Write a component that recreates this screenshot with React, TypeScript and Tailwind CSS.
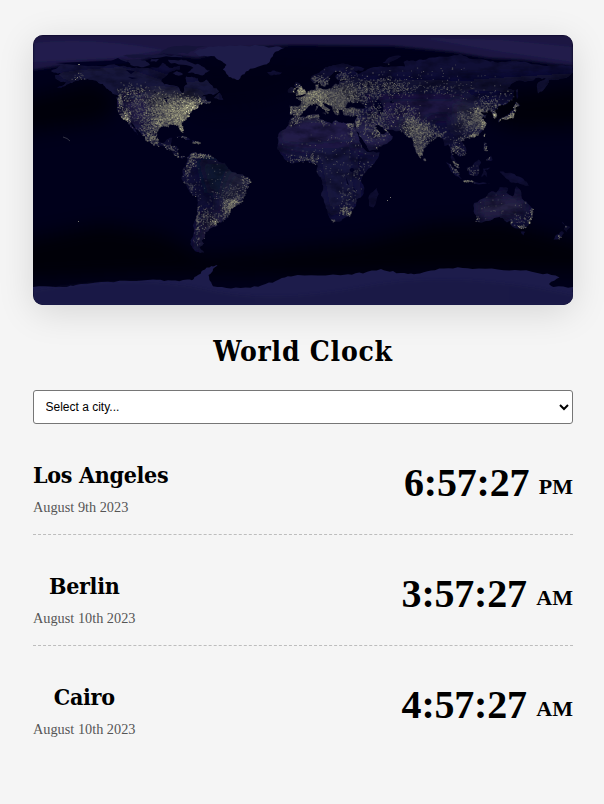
type Pt = [number, number];

// Coastlines as "longitude,latitude" pairs, drawn on an equirectangular grid.
const NORTH_AMERICA =
  "-168,66 -163,69 -157,71 -150,70.5 -141,69.6 -134,69 -128,70.3 -120,69.5 -114,68 -108,68 -102,68 -96,68.5 -94,71.5 -91,69.5 -87,68 -82,69.5 -82,67 -87,66 -90,64 -94,61 -94.5,59 -92.5,57 -88,56.5 -83,55.2 -82,53 -80,51.2 -79,53 -79.5,55 -77,57 -78,60 -78,62.3 -74,62.2 -70,61 -69.5,59 -67,58.5 -64.5,60.3 -62,57.5 -60,55 -56,52.5 -57,51.4 -60,50.2 -66,50.2 -68,48.8 -65,49 -65,47 -61.5,45.8 -64,44.3 -66.5,44.8 -70,43.6 -70.5,42 -72,41 -74,40.5 -75.5,38 -76,36 -77.5,34.5 -81,32 -81.3,30 -80,27 -80.4,25.2 -81.8,26 -82.8,28 -84,30 -86,30.4 -89.5,30.2 -90,29.1 -94,29.6 -97,27.8 -97.7,24.5 -97.5,22 -96,19.2 -94.5,18.2 -92,18.6 -90.5,20.6 -87,21.5 -87.6,19 -88.4,16 -84,15.8 -83.3,13 -83.7,11 -82,9 -79.5,9.5 -77.3,8.5 -78.5,8.6 -80.5,7.3 -83,8.3 -85.8,10 -87.5,13 -91,14 -94,16.2 -97,15.8 -101,17.3 -105.3,19.8 -105.5,22.5 -109,25.7 -112.5,29.5 -114.7,31.7 -112,27.5 -110,23.2 -112.2,25.5 -115,28.5 -117,32.3 -120.5,34.4 -122.3,37 -124.2,40.3 -124,46 -124.5,48.3 -122.8,49 -127,51 -130,54 -133.5,57.5 -137,58.8 -142,60 -148,60.7 -151.5,59.4 -154,58 -158.5,56 -164,54.6 -161,56 -157.5,58.5 -162,59 -165,61 -165.5,63 -161,64.5 -166,65";
const ARCTIC_ISLANDS = [
  "-125,72 -123,74 -117,73 -115,70 -105,69 -102,70 -105,73 -114,73.5 -118,72",
  "-90,73.5 -81,73.6 -77,72.5 -70,70.8 -67,69 -62,66.5 -65,64.8 -67,63 -72,64 -77,65 -73,68 -78,70 -88,71",
  "-98,72 -96,74 -101,74 -102,72.5",
  "-120,76 -110,77 -100,76.5 -90,76.5 -81,76 -80,75 -95,75 -106,75 -115,75",
  "-95,78 -90,81.5 -78,83 -64,82.6 -72,80 -77,77.3 -88,77.3",
  "-87,64.5 -84,66 -80,64 -83,62.8",
];
const GREENLAND =
  "-73,78.3 -67,80.5 -60,82 -45,82.6 -32,83.5 -20,82 -12,81.5 -18,79 -20,76 -22,73 -24,70.5 -32,68 -38,65.7 -41,63 -43,60 -47,61 -51,64 -53.5,67 -51,70 -55,73 -59,75.8 -68,76";
const SOUTH_AMERICA =
  "-77.5,8.5 -75,11 -72,12 -71,11 -68,11.5 -62,10.7 -60,8.5 -57,6 -52,4.8 -50,1 -48,-1 -44,-2.6 -40,-3 -36,-5 -35,-8 -37.5,-12 -39,-16 -40.5,-21 -45,-23.4 -48.5,-26 -49,-29 -52,-33 -54.5,-35 -58,-34.2 -57,-37 -62,-39 -65,-41.5 -65.5,-45 -67.5,-47 -66,-49 -69,-51.5 -66,-55 -71,-54.5 -74,-51 -75,-47 -73,-42 -73.5,-37 -71.5,-32 -70.3,-25 -70.3,-18.5 -75.5,-15 -78.5,-9 -81,-6 -80,-3 -80.5,0 -78,2.5 -77.3,6";
const AFRICA =
  "-6,35.7 -2,35.2 5,36.8 10.5,37.2 11,34 15,32.3 19.5,30.4 21,32.8 25,31.7 29,31 34,31.2 34.5,28 37,22 39,17 43,12 51,11.8 50.5,9 46,3 41.5,-2 39,-6 40.5,-11 40.5,-15.5 35.5,-20 35.4,-24 32.8,-27 30,-31.2 25.5,-34 20,-34.8 18.3,-33 16.5,-28 14.5,-22.5 12,-17 13.7,-11 12,-5 9,-1 9.7,3.5 6.5,4.3 3,6.4 -3,5 -8,4.4 -12.8,7.7 -15,11 -17.4,14.7 -16.3,19.5 -17,21.5 -14.5,26 -10,29.5 -9.5,32";
const EURASIA =
  "-9.3,43 -1.8,43.4 -1.2,46 -4.7,48.3 -1.5,48.7 2,51 5,53.3 8.5,53.8 8.2,57 10.5,57.5 10,55 14,54 19,54.5 21.5,57.5 24,57.2 24,59.3 30,60 23,60 21.5,62 25.5,65 22,65.7 17.5,62 17,59 16.5,57 14,55.5 12.5,56.5 11,59 7,58 5,60 5.5,62.5 11,65 15,68.5 20,70 26,71 31,70 41,67.5 40,66.2 34,66.5 37,64 42,66.4 45,68 54,68.7 60,69 68,69 67,72 72,73 75,72.5 80,73.3 88,75 100,76.4 105,77.6 113,74 123,73 130,71.5 140,72.7 150,71.5 160,69.7 170,70 180,69 180,65 177,62.3 170,60 164,60 163,57 160,53 156.7,51 156,57 162,61 157,61.7 150,59.3 142,59.2 136,54.7 141,53 140,48 135,43.5 130.5,42.5 127.5,39.5 129.3,36 126.5,34.5 126.5,37 125,39.7 121.5,39 118,39 119,37.5 122.5,37 119.2,35 121.8,31.5 121,28 117,23.7 110.5,21.2 108,21.5 105.8,19 109,12.5 106.7,10 105,8.7 100.5,13.5 99.4,10 103.3,4 104,1.3 101,3 98.4,8 98.5,13 97,17 94.3,16 92,21.5 88.5,21.7 86,20 82,16.5 80,13 79.8,10.3 77.5,8 76,11 73.5,16 72.7,21 69,22.4 66.7,25.2 57,26.8 54,26.6 50.5,30 48,30 50.5,25.5 52,24 54.5,24.2 56.4,26 59.8,22.5 56,17.5 52,15.5 44,12.6 42.7,16 39,21.3 35,28 34.5,31.3 36,36.5 30,36.3 27,37 26.3,40 29,41 33,42 38,41 41.5,41.5 38,45 36,45.3 33.5,44.5 31.5,46.5 28.5,43.7 28,41.3 23.5,40.5 24,38 22.7,36.5 19.4,40.5 19.3,42 14,45 12.3,45 14,42.4 18.4,40.2 16,38 12.3,41.7 9,44.3 4.5,43.4 3,42 0,39.7 -0.7,37.6 -5.5,36 -9,37";
const AUSTRALIA =
  "114,-22 114,-26 115.7,-32 115,-34.3 118,-35 123.5,-34 129,-31.7 133,-32 136,-35 138,-34 140,-38 146.5,-39 150,-37.3 153,-31 153.3,-26 149,-21 146,-19 145.5,-15 142.5,-10.8 141,-15 140,-17.6 135.5,-15 136.7,-12 131,-11.5 129,-15 125.5,-14.2 122,-18";
const ANTARCTICA =
  "-180,-78 -165,-78 -155,-77 -148,-76 -130,-74.5 -115,-74 -100,-73 -90,-73.5 -80,-73.4 -74,-73.5 -70,-70 -67,-67 -61,-64 -57,-63.4 -60,-66 -63,-70 -62,-74 -60,-77.5 -48,-79 -35,-78.5 -25,-76 -16,-73 -8,-71 10,-70.3 30,-69.5 40,-69 52,-66 60,-67.4 70,-69.3 78,-69 88,-66.8 100,-65.7 113,-66 130,-66.3 145,-67 160,-69.5 171,-71.7 164,-76 167,-78 180,-78 180,-90 -180,-90";
const ISLANDS = [
  "-5,50 1.5,51.3 1.5,53 -1,54.8 -2,57.5 -5,58.5 -6,56.5 -3,54.5 -5,52",
  "-10,51.7 -6,52.2 -5.7,54.7 -8,55.3 -10,53.5",
  "-24,65.4 -19,66.4 -14,65 -18,63.4 -23,64",
  "130,31.3 131.5,34 135.5,34 140,35.3 142,39.5 141,41.3 145,43.3 142,45.5 140,42 140,39.7 137,37.2 130.5,33.8",
  "142,46 143.5,49 143,54 141.8,53",
  "95.5,5.5 99,3 104,-2 106,-6 102,-4 98,1",
  "105.3,-6.5 110,-6.5 115,-8 125,-9.5 120,-9.3 109,-7.8",
  "109,1.5 113,3.2 117,7 118.8,5 117.5,1 116,-4 110.5,-3",
  "119,-5 120,1 125,1.5 121,0 123,-5 121,-3",
  "131,-1 136,-2 141,-2.6 147,-6 150.5,-10.5 143,-8.5 138,-8 134,-4",
  "120,14 120.5,18.5 122.3,18 122,14 124,12.5 121,13",
  "122,7 125.5,9.7 126.3,6.5 124,6",
  "49.3,-12 50.5,-16 47,-25 44,-24 44,-17",
  "172.7,-34.5 175.5,-37 178.3,-38 175.5,-41.5 173.8,-39.5 174.7,-37",
  "172.7,-40.7 174,-42 170.5,-46 167,-46.5 168,-44",
  "145,-41 148.3,-41 147,-43.6",
  "-85,22 -80,23 -75,20.3 -78,20 -82,22.6",
  "-74,20 -68.5,18.6 -71,17.8 -74,18.3",
  "-59.3,48 -55.5,51.5 -53,47 -56,47",
  "80,9.5 81.8,7 80.2,6",
  "120.2,23 121.6,25 120.8,22",
  "8.2,39 9.7,41 9,42.8 8.6,41", "12.5,38 15.5,38 15,36.8",
  "53,71.5 59,75.5 68,76.8 58,72 57,70.7",
];
const ALL_LAND = [NORTH_AMERICA, SOUTH_AMERICA, AFRICA, EURASIA, AUSTRALIA, ...ISLANDS];

const parse = (s: string): Pt[] =>
  s.split(" ").map((p) => {
    const [lon, lat] = p.split(",").map(Number);
    return [(lon + 180) * 1.5, (90 - lat) * 1.5];
  });

function makeRandom(seed: number) {
  let s = seed;
  return () => {
    s = (s + 0x6d2b79f5) | 0;
    let t = Math.imul(s ^ (s >>> 15), 1 | s);
    t = (t + Math.imul(t ^ (t >>> 7), 61 | t)) ^ t;
    return ((t ^ (t >>> 14)) >>> 0) / 4294967296;
  };
}

// Roughens straight coast segments by midpoint displacement.
function coast(s: string): Pt[] {
  const rnd = makeRandom(s.length * 77);
  let pts = parse(s);
  for (let k = 0; k < 2; k++) {
    const out: Pt[] = [];
    pts.forEach((a, i) => {
      const b = pts[(i + 1) % pts.length];
      const d = Math.hypot(b[0] - a[0], b[1] - a[1]);
      out.push(a);
      if (d > 2.4 && d < 60) {
        const j = (rnd() - 0.5) * Math.min(d, 7) * 0.32;
        out.push([(a[0] + b[0]) / 2 - (j * (b[1] - a[1])) / d, (a[1] + b[1]) / 2 + (j * (b[0] - a[0])) / d]);
      }
    });
    pts = out;
  }
  return pts;
}
const toPath = (pts: Pt[]) => "M" + pts.map(([x, y]) => `${x.toFixed(1)} ${y.toFixed(1)}`).join("L") + "Z";
const outline = (s: string) => toPath(coast(s));

const landShapes = ALL_LAND.map(coast);
const landPath = landShapes.map(toPath).join("");
const arcticPath = ARCTIC_ISLANDS.map(outline).join("");

function inside(x: number, y: number, poly: Pt[]) {
  let hit = false;
  for (let i = 0, j = poly.length - 1; i < poly.length; j = i++) {
    const [xi, yi] = poly[i];
    const [xj, yj] = poly[j];
    if (yi > y !== yj > y && x < ((xj - xi) * (y - yi)) / (yj - yi) + xi) hit = !hit;
  }
  return hit;
}

// Lit regions: lon, lat, spread lon, spread lat, number of lights, strength 0..1
const LIGHTS: number[][] = [
  [-82, 39, 6, 4, 1000, 0.64], [-74.5, 41, 3, 1.6, 220, 0.85], [-88, 38, 6, 6, 850, 0.5], [-82, 33, 4, 3, 300, 0.58],
  [-97, 37, 5, 7, 600, 0.43], [-81, 28, 1.2, 2, 90, 0.85], [-96, 31, 3, 2, 140, 0.65], [-107, 40, 6, 6, 320, 0.33],
  [-119, 36, 2, 2.4, 130, 0.65], [-118, 34, 1.2, 0.7, 40, 0.85], [-122, 46, 1, 3, 75, 0.65], [-113, 52, 5, 3, 150, 0.48],
  [-101, 21, 4, 2.2, 180, 0.56], [-103, 26, 4, 3, 110, 0.4], [-90, 15, 3, 1.6, 70, 0.48], [-84, 10.3, 2, 1, 30, 0.5],
  [-73, 45.8, 4, 1.2, 120, 0.68], [-64, 46, 3, 1.4, 60, 0.5], [-79, 22, 3, 1, 40, 0.48], [-70, 18.7, 2, 0.6, 45, 0.6],
  [-149, 62, 3, 2, 16, 0.5], [-75, 7, 2, 3, 90, 0.5], [-68, 10, 4, 1, 100, 0.58], [-78, -1, 1.5, 3, 45, 0.42],
  [-76, -11, 3, 4, 50, 0.35], [-70.5, -34, 0.8, 6, 80, 0.46], [-64, -32, 4, 4, 140, 0.36], [-59, -34.5, 1.5, 1, 50, 0.7],
  [-47.5, -22.5, 3, 2, 230, 0.52], [-51, -27, 2.5, 3, 150, 0.42], [-42, -18, 3, 3, 90, 0.38], [-37, -8, 2.5, 4, 130, 0.42],
  [-50, -16, 4, 3, 70, 0.3], [-68, -45, 4, 5, 25, 0.3], [-2, 53, 2, 2, 200, 0.68], [6, 51, 4, 2, 330, 0.62],
  [12, 50, 7, 3.5, 620, 0.43], [2, 47, 4, 3, 240, 0.44], [-4, 40, 4, 2.5, 190, 0.44], [-8.5, 40, 0.6, 1.7, 50, 0.65],
  [0, 39.5, 2, 2, 70, 0.55], [11, 44.5, 3, 2, 150, 0.6], [15, 41, 2, 2, 80, 0.52], [22, 48, 8, 4, 450, 0.35],
  [30, 48, 8, 4, 250, 0.32], [38, 54, 8, 4, 220, 0.33], [14, 59, 4, 3, 110, 0.42], [25, 62, 3, 3, 75, 0.38],
  [8, 61, 2, 2, 35, 0.42], [50, 55, 9, 3.5, 170, 0.36], [61, 56, 5, 2.5, 110, 0.42], [78, 55, 12, 2, 90, 0.3],
  [105, 53, 15, 3, 65, 0.28], [132, 47, 5, 4, 40, 0.33], [31, 39.5, 5, 1.6, 130, 0.36], [24, 41, 3, 2, 90, 0.42],
  [35.5, 32.5, 1.3, 2.2, 80, 0.62], [31, 30.6, 1, 1, 45, 0.6], [32.1, 27, 0.5, 3, 36, 0.5], [5, 36, 8, 0.8, 145, 0.46],
  [-7, 33, 3, 1.5, 55, 0.45], [14, 32.4, 4, 0.8, 35, 0.5], [43, 24, 6, 5, 80, 0.4], [51, 26, 2.5, 2, 100, 0.6],
  [52, 34, 6, 4, 170, 0.33], [46, 36, 4, 4, 120, 0.36], [67, 40, 5, 2.5, 110, 0.38], [72, 31, 3, 4, 230, 0.45],
  [77, 27, 5, 3, 390, 0.4], [78, 18, 3.5, 5, 320, 0.36], [77, 11, 1.5, 2, 100, 0.43], [87, 24, 4, 2, 130, 0.35],
  [80.5, 7, 0.6, 0.8, 18, 0.45], [101, 14, 2, 3, 110, 0.38], [102, 3, 1.5, 2, 60, 0.5], [107, 11, 1.5, 2, 35, 0.38],
  [107, 21, 2, 1.4, 50, 0.36], [114, 23, 2, 0.8, 80, 0.62], [116, 34, 4, 4, 440, 0.37], [120, 31, 1.5, 1.5, 110, 0.55],
  [117, 39, 2, 1.5, 90, 0.5], [108, 33, 5, 4, 130, 0.3], [124, 43, 4, 3, 150, 0.36], [127.3, 36.5, 1, 1, 70, 0.75],
  [121, 24, 0.5, 1, 30, 0.75], [137, 35.5, 4, 1.2, 200, 0.75], [140.2, 37.5, 1, 3, 90, 0.62], [142, 43, 1, 1, 30, 0.5],
  [110, -7, 4, 0.6, 90, 0.52], [100, 1, 3, 3, 60, 0.33], [121, 15, 1, 2, 45, 0.42], [123, 9, 2, 2, 30, 0.33],
  [114, 2, 3, 3, 40, 0.28], [28, -27, 2.3, 1.6, 85, 0.58], [19, -33.7, 1, 0.6, 28, 0.55], [31, -29.5, 1, 1, 28, 0.48],
  [30, -18, 4, 4, 60, 0.3], [5, 7, 3, 2, 70, 0.43], [-4, 7, 6, 2, 60, 0.33], [37, 0, 4, 5, 45, 0.3],
  [151, -33.5, 1, 1.2, 30, 0.65], [145, -37.7, 1.3, 0.5, 26, 0.62], [152.5, -27.5, 0.8, 2, 28, 0.58], [138.6, -34.8, 0.5, 0.5, 10, 0.55],
  [116, -32.5, 0.7, 1.5, 20, 0.55], [146, -34, 4, 4, 55, 0.33], [134, -22, 10, 6, 35, 0.22], [174.5, -39, 1.5, 2.5, 25, 0.52],
  [171, -44, 1.5, 1.5, 15, 0.45], [20, 10, 14, 10, 120, 0.2], [-60, -10, 9, 8, 55, 0.2], [60, 63, 28, 4, 100, 0.25],
];

const LEVELS = 6;
function cityLights() {
  const rnd = makeRandom(20230810);
  const paths: string[] = Array(LEVELS).fill("");
  const gauss = () => rnd() + rnd() + rnd() + rnd() - 2;
  for (const [lon, lat, sx, sy, n, strength] of LIGHTS) {
    for (let i = 0; i < n; i++) {
      const x = (lon + gauss() * sx * 1.75 + 180) * 1.5;
      const y = (90 - lat - gauss() * sy * 1.75) * 1.5;
      if (!landShapes.some((p) => inside(x, y, p))) continue;
      const level = Math.min(LEVELS - 1, Math.floor(strength * (0.15 + rnd() * rnd() * 1.1) * LEVELS));
      const r = rnd() > 0.87 ? 1.3 : 1;
      paths[level] += `M${x.toFixed(1)} ${y.toFixed(1)}h${r}v${r}h-${r}z`;
    }
  }
  return paths;
}
const lightPaths = cityLights();
const LIGHT_COLORS = ["#484853", "#656460", "#84836f", "#a5a483", "#c9c89b", "#efedbd"];

function EarthAtNight() {
  return (
    <svg viewBox="0 0 540 270" className="block h-full w-full" role="img" aria-label="Earth at night">
      <defs>
        <clipPath id="land"><path d={landPath} /></clipPath>
        <filter id="soft" x="-30%" y="-30%" width="160%" height="160%"><feGaussianBlur stdDeviation="6" /></filter>
        <filter id="deep" x="-10%" y="-20%" width="120%" height="140%" colorInterpolationFilters="sRGB"><feGaussianBlur stdDeviation="9" /></filter>
        <filter id="ice" x="-10%" y="-30%" width="120%" height="160%"><feGaussianBlur stdDeviation="1.6" /></filter>
        <filter id="grain" x="0" y="0" width="100%" height="100%" colorInterpolationFilters="sRGB">
          <feTurbulence type="fractalNoise" baseFrequency="0.06 0.11" numOctaves="4" seed="8" />
          <feColorMatrix values="0 0 0 0 0  0 0 0 0 0  0 0 0 0 0.06  1.7 0 0 0 -0.65" />
        </filter>
      </defs>
      <rect width="540" height="270" fill="#00001b" />
      <g filter="url(#deep)" opacity="0.85">
        <path d="M-20 68L60 48L85 65L70 85L-20 98Z" fill="#000006" />
        <path d="M455 62L560 50V90L480 93L445 75Z" fill="#000006" />
        <path d="M90 35L225 25L300 30L540 35V40L290 45L230 70L180 75Z" fill="#000015" />
        <path d="M-20 208L70 190L130 200L170 222L330 208L400 190L470 188L560 212V237L400 236L270 240L120 238L-20 244Z" fill="#000005" />
      </g>
      <g filter="url(#ice)">
        <path d="M0 0H540V31L520 29L490 25L455 23L420 17L360 11L260 10L200 13L165 23L130 19L105 26L75 26L45 28L0 35Z" fill="#1a1843" />
        <path d="M0 8Q60 2 130 15L80 23L0 27Z" fill="#242150" opacity=".75" />
        <path d="M390 3L470 5L540 12V27L470 17Z" fill="#272254" opacity=".55" />
      </g>
      <path d={arcticPath} fill="#15143a" />
      <path d={landPath} fill="#100f36" />
      <g clipPath="url(#land)">
        <g filter="url(#soft)">
          <path d="M0 35L90 28L140 45L190 40V75L140 70L70 65Z" fill="#13123a" />
          <path d="M85 60L125 60L120 95L90 90Z" fill="#201e45" />
          <path d="M115 58L168 62L160 88L130 92Z" fill="#373740" />
          <path d="M240 82L325 82L320 110L245 112Z" fill="#231e4a" />
          <path d="M315 80L360 90L355 115L325 112Z" fill="#28224e" />
          <path d="M340 62L430 60L435 80L350 88Z" fill="#1c1743" />
          <path d="M300 45H430L540 38V60L430 55L330 60Z" fill="#0a0a2f" />
          <path d="M245 112H320L325 165L295 180L285 125Z" fill="#17143c" />
          <path d="M165 125L205 125L200 158L175 158Z" fill="#10132f" />
          <path d="M200 130L220 145L200 175L185 170Z" fill="#22203e" />
          <path d="M170 180L190 175V210L165 216Z" fill="#201c3d" />
          <path d="M445 165L490 160V180L445 185Z" fill="#252044" />
          <path d="M262 52H322V80H262Z" fill="#383840" />
          <path d="M365 85L395 90L390 125L375 120Z" fill="#2c2b41" />
          <path d="M425 65L455 73L445 98L420 95Z" fill="#272540" />
        </g>
        <rect width="540" height="270" filter="url(#grain)" opacity=".6" />
      </g>
      <path d={outline(GREENLAND)} fill="#1e1c49" />
      <path d={outline(ANTARCTICA)} fill="#1d1c4b" />
      <path d="M0 256Q100 238 170 254T330 252T540 260V270H0Z" fill="#171541" opacity=".4" filter="url(#ice)" />
      <g fill="#010122">
        <ellipse cx="346" cy="72" rx="4" ry="7.5" transform="rotate(-20 346 72)" />
        <path d="M129 64L135 62L142 65L136 66L134 71L132 66ZM141 71L150 70L149 72L142 72.5ZM139 65L146 68L143 69Z" />
        <ellipse cx="319" cy="135" rx="2.2" ry="2" />
        <path d="M313 142L316 150L314 149ZM320 151L323 157L321 156Z" />
        <ellipse cx="359" cy="67" rx="2" ry="1.3" />
        <path d="M93 35L102 36L98 39ZM95 42L105 43L99 44ZM121 56L124 58L123 61Z" />
        <path d="M22 28L48 27L78 26L85 23L88 25L96 28L82 29L55 31Z" />
      </g>
      <g>
        {lightPaths.map((d, i) => (
          <path key={i} d={d} fill={LIGHT_COLORS[i]} opacity={0.8} />
        ))}
      </g>
      <path d="M30 102L34 103.500L37 106" stroke="#41414f" strokeWidth=".8" fill="none" />
      <path d="M45 29h2v1h-2zM44 42h1v1h-1zM42 44h1v1h-1zM45 186h1v1h-1zM354 165h1v1h-1zM357 162h1v1h-1z" fill="#77776f" />
    </svg>
  );
}

const CLOCKS = [
  { city: "Los Angeles", date: "August 9th 2023", time: "6:57:27", period: "PM" },
  { city: "Berlin", date: "August 10th 2023", time: "3:57:27", period: "AM" },
  { city: "Cairo", date: "August 10th 2023", time: "4:57:27", period: "AM" },
];

export default function App() {
  return (
    <main className="h-[804px] w-[604px] overflow-hidden bg-[#f5f5f5] pt-[35px] pr-[31px] pl-[33px] font-['Liberation_Serif',serif] text-black">
      <div className="h-[270px] overflow-hidden rounded-[10px] shadow-[0_7px_36px_rgba(0,0,0,0.13)]">
        <EarthAtNight />
      </div>
      <h1 className="mt-[27px] h-[40px] text-center font-['DejaVu_Serif_Condensed','DejaVu_Serif',serif] text-[28px] leading-[40px] font-bold tracking-[0.75px]">
        World Clock
      </h1>
      <select
        defaultValue=""
        className="mt-[18px] block h-[34px] w-full rounded-[3px] border border-[#767676] bg-white pr-[8px] pl-[7.5px] font-['Liberation_Sans',sans-serif] text-[12px] text-black"
      >
        <option value="">Select a city...</option>
        <option>Los Angeles</option>
        <option>Berlin</option>
        <option>Cairo</option>
      </select>
      <section>
        {CLOCKS.map((c) => (
          <div
            key={c.city}
            className="flex h-[111px] items-start justify-between border-b border-dashed border-[#bdbdbd] pt-[36px] last:border-b-0"
          >
            <div>
              <h2 className="h-[32px] text-center font-['DejaVu_Serif_Condensed','DejaVu_Serif',serif] text-[23px] leading-[30px] font-bold tracking-[-0.3px]">
                {c.city}
              </h2>
              <p className="mt-[6px] text-[14.3px] leading-[18px] text-[#555]">{c.date}</p>
            </div>
            <div className="flex items-baseline text-[40px] leading-[46px] font-bold">
              <span className="tracking-[-0.2px]">{c.time}</span>
              <span className="ml-[9.5px] text-[22px] leading-none [transform:translateY(-2px)]">{c.period}</span>
            </div>
          </div>
        ))}
      </section>
    </main>
  );
}
